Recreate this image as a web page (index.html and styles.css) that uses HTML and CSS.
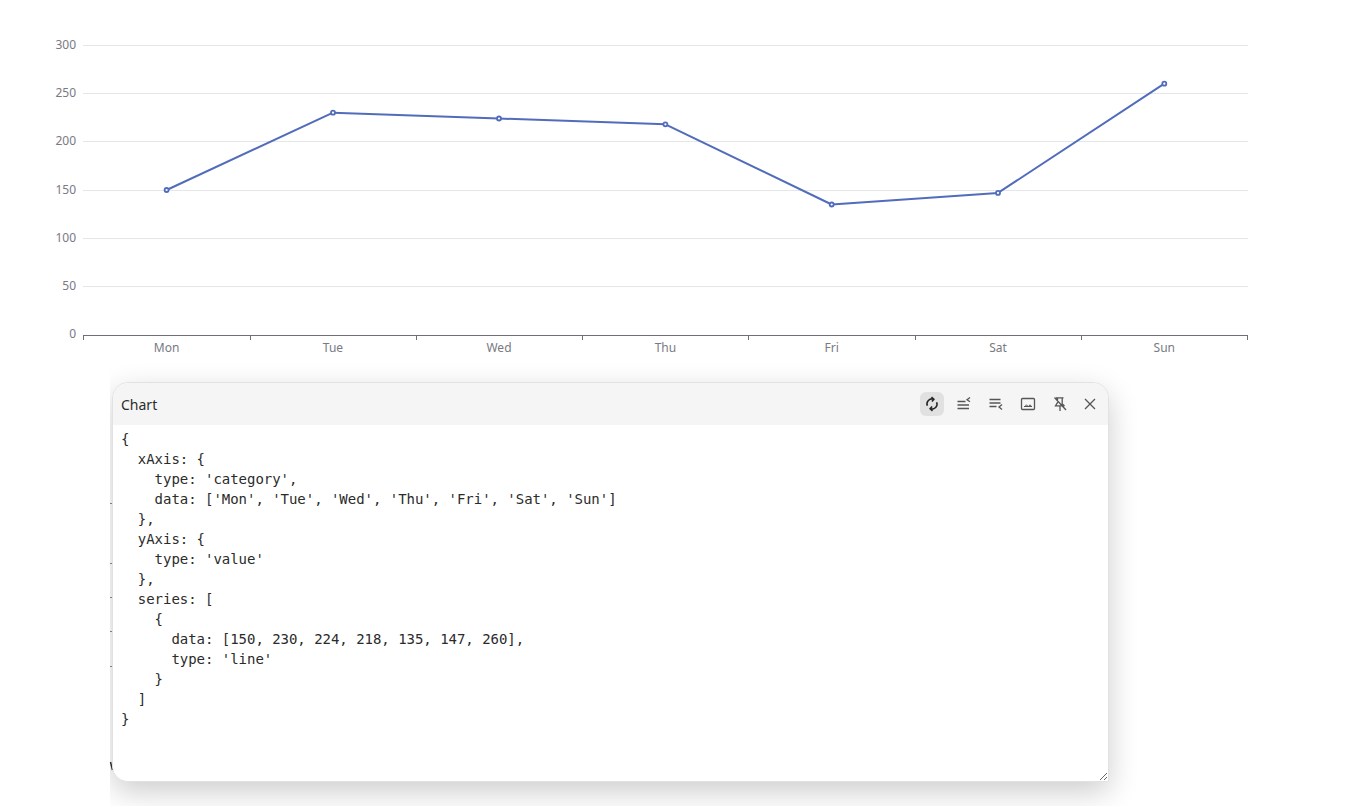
FILE: index.html
```html
<!DOCTYPE html>
<html lang="en">
<head>
<meta charset="utf-8">
<title>Chart</title>
<link rel="stylesheet" href="styles.css">
</head>
<body>
<svg class="chart" width="1363" height="370" viewBox="0 0 1363 370">
  <g class="grid">
    <path d="M83 45.5H1248"/><path d="M83 93.5H1248"/><path d="M83 141.5H1248"/><path d="M83 190.5H1248"/><path d="M83 238.5H1248"/><path d="M83 286.5H1248"/>
  </g>
  <g class="ylabels">
    <text x="76" y="48.500">300</text><text x="76" y="96.500">250</text><text x="76" y="144.500">200</text><text x="76" y="193.500">150</text><text x="76" y="241.500">100</text><text x="76" y="289.500">50</text><text x="76" y="337.500">0</text>
  </g>
  <path class="axis" d="M83 335.5H1248M83.5 335V340M250.5 335V340M416.5 335V340M582.5 335V340M748.5 335V340M915.5 335V340M1081.5 335V340M1247.5 335V340"/>
  <g class="xlabels">
    <text x="166.6" y="352">Mon</text><text x="333" y="352">Tue</text><text x="499" y="352">Wed</text><text x="665.4" y="352">Thu</text><text x="831.7" y="352">Fri</text><text x="998" y="352">Sat</text><text x="1164.3" y="352">Sun</text>
  </g>
  <polyline class="line" points="166.6,190 333,112.7 499,118.5 665.4,124.3 831.7,204.5 998,192.9 1164.3,83.7"/>
  <g class="dots">
    <circle cx="166.6" cy="190" r="2"/><circle cx="333" cy="112.7" r="2"/><circle cx="499" cy="118.5" r="2"/><circle cx="665.4" cy="124.3" r="2"/><circle cx="831.7" cy="204.5" r="2"/><circle cx="998" cy="192.9" r="2"/><circle cx="1164.3" cy="83.7" r="2"/>
  </g>
</svg>
<svg class="chart under" width="1363" height="436" viewBox="0 370 1363 436">
  <path class="ticks" d="M110 503.500H113M110 563.500H113M110 597.500H113M110 631.500H113M110 666.500H113"/>
  <path class="glyph" d="M110.500 762L112.500 770"/>
</svg>
<section class="modal">
  <header class="modal-head">
    <span class="modal-title">Chart</span>
    <div class="tools">
      <button class="tool active" type="button" aria-label="Refresh">
        <svg viewBox="0 0 16 16"><path d="M3.300 9.700A5 5 0 0 1 9.600 3.200M7.500 1.100L9.900 3.200L7.900 5.500"/><path d="M12.700 6.300A5 5 0 0 1 6.400 12.800M8.500 14.900L6.100 12.800L8.100 10.500"/></svg>
      </button>
      <button class="tool" type="button" aria-label="Collapse up">
        <svg viewBox="0 0 16 16"><path d="M1.500 5.500H9.500M1.500 9H13M1.500 12.500H13M14 1.500L11 3.800L14 5.800"/></svg>
      </button>
      <button class="tool" type="button" aria-label="Collapse down">
        <svg viewBox="0 0 16 16"><path d="M1.500 3.500H12.500M1.500 7H12.500M1.500 10.500H8.500M14 8.600L11 11L14 13.500"/></svg>
      </button>
      <button class="tool" type="button" aria-label="Image">
        <svg viewBox="0 0 16 16"><rect x="1.500" y="2.500" width="13" height="11" rx="1"/><path class="thin" d="M4 10.500H12M5 10.500L6.500 8.800L8 10.500M8.500 10.500L10 8.800L11.500 10.500"/></svg>
      </button>
      <button class="tool" type="button" aria-label="Unpin">
        <svg viewBox="0 0 16 16"><path d="M2.500 1.500L14 14M4 1.800H11.500M5.500 2V6.500L3.500 9.800H12.500M10.200 2V8L12.500 9.800M8 10V15"/></svg>
      </button>
      <button class="tool close" type="button" aria-label="Close">
        <svg viewBox="0 0 16 16"><path d="M3 3L13 13M13 3L3 13"/></svg>
      </button>
    </div>
  </header>
  <textarea class="code" spellcheck="false">{
  xAxis: {
    type: 'category',
    data: ['Mon', 'Tue', 'Wed', 'Thu', 'Fri', 'Sat', 'Sun']
  },
  yAxis: {
    type: 'value'
  },
  series: [
    {
      data: [150, 230, 224, 218, 135, 147, 260],
      type: 'line'
    }
  ]
}</textarea>
</section>
</body>
</html>
```

FILE: styles.css
```css
html, body {
  margin: 0;
  height: 100%;
  overflow: hidden;
  background: #fff;
}

.chart {
  display: block;
}

.grid path {
  stroke: #e4e6ea;
  stroke-width: 1;
  fill: none;
}

.ylabels text,
.xlabels text {
  font-family: "Noto Sans", "Open Sans", sans-serif;
  font-size: 12px;
  fill: #787a82;
}

.ylabels text {
  text-anchor: end;
}

.xlabels text {
  text-anchor: middle;
}

.axis {
  stroke: #6e7079;
  stroke-width: 1;
  fill: none;
}

.line {
  fill: none;
  stroke: #526cbc;
  stroke-width: 2;
  stroke-linejoin: bevel;
}

.dots circle {
  fill: #fff;
  stroke: #526cbc;
  stroke-width: 1.800;
}

.ticks {
  stroke: #8a8a8a;
  stroke-width: 1;
  fill: none;
}

.glyph {
  stroke: #333;
  stroke-width: 1.500;
  fill: none;
}

.modal {
  position: absolute;
  left: 112px;
  top: 382px;
  width: 997px;
  height: 400px;
  box-sizing: border-box;
  display: flex;
  flex-direction: column;
  border: 1px solid #e2e2e2;
  border-radius: 16px 16px 0 16px;
  background: #fff;
  box-shadow: 0 10px 30px rgba(0, 0, 0, 0.2);
  clip-path: inset(-60px -60px -60px -2px);
}

.modal-head {
  display: flex;
  align-items: center;
  justify-content: space-between;
  height: 42px;
  flex: none;
  padding: 0 6px 0 8px;
  background: #f5f5f5;
  border-radius: 15px 15px 0 0;
}

.modal-title {
  font-family: "Noto Sans", "Open Sans", sans-serif;
  font-size: 14px;
  color: #2c2c2c;
}

.tools {
  display: flex;
  align-items: center;
  gap: 8px;
}

.tool {
  width: 24px;
  height: 24px;
  padding: 4px;
  border: 0;
  border-radius: 6px;
  background: transparent;
  display: flex;
  align-items: center;
  justify-content: center;
}

.tool.active {
  background: #e1e1e1;
}

.tool.close {
  margin-left: -2px;
}

.tool svg {
  width: 16px;
  height: 16px;
  display: block;
  fill: none;
  stroke: #555;
  stroke-width: 1.300;
}

.tool.active svg {
  stroke: #222;
  stroke-width: 1.500;
}

.tool .thin {
  stroke-width: 1;
}

.code {
  flex: 1;
  display: block;
  width: 100%;
  box-sizing: border-box;
  margin: 0;
  padding: 4px 8px 2px;
  border: 0;
  border-radius: 0 0 0 15px;
  outline: 0;
  background: #fff;
  color: #2b2b2b;
  font-family: "DejaVu Sans Mono", "Liberation Mono", monospace;
  font-size: 14px;
  letter-spacing: -0.03px;
  line-height: 20px;
  white-space: pre;
  resize: both;
}
```
